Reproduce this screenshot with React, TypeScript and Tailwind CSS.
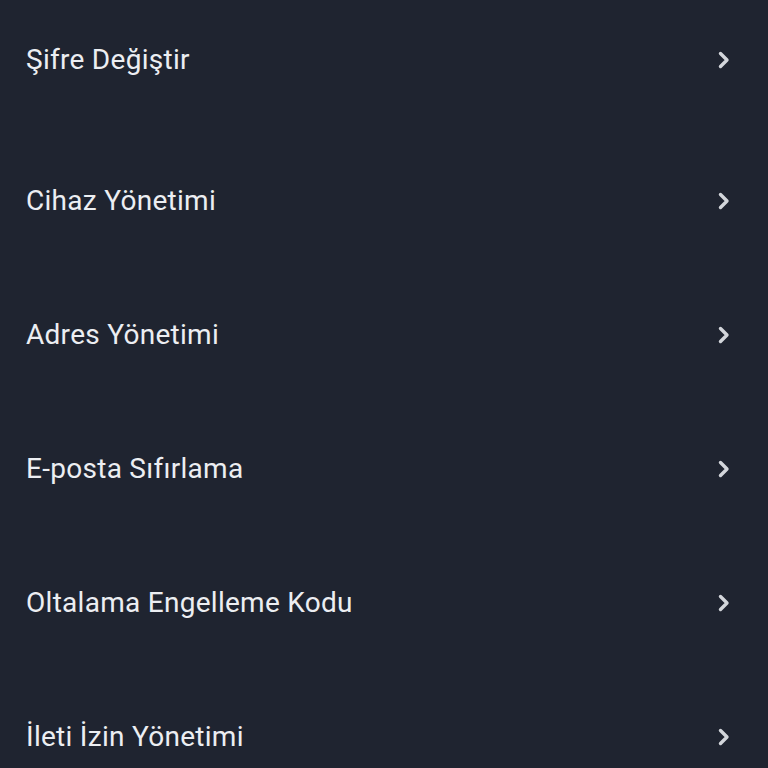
import React from 'react';

const items = [
  'Şifre Değiştir',
  'Cihaz Yönetimi',
  'Adres Yönetimi',
  'E-posta Sıfırlama',
  'Oltalama Engelleme Kodu',
  'İleti İzin Yönetimi',
];

function Chevron() {
  return (
    <svg width="16" height="20" viewBox="0 0 16 20" fill="none" className="shrink-0">
      <polyline
        points="4.5,3.5 11,10 4.5,16.5"
        stroke="#d3d6db"
        strokeWidth="3.4"
        strokeLinecap="round"
        strokeLinejoin="round"
      />
    </svg>
  );
}

export default function App() {
  return (
    <div
      className="w-[768px] h-[768px] overflow-hidden bg-[#1f2430]"
      style={{ fontFamily: 'Roboto, "Noto Sans", sans-serif' }}
    >
      {items.map((label, i) => (
        <div
          key={label}
          className={
            i === 0
              ? 'flex items-center justify-between h-[134px] pb-[14px] pl-[26px] pr-[36px]'
              : 'flex items-center justify-between h-[134px] pl-[26px] pr-[36px]'
          }
        >
          <span className="text-[28px] leading-none tracking-[0.01em] text-[#eceef2]">{label}</span>
          <Chevron />
        </div>
      ))}
    </div>
  );
}
